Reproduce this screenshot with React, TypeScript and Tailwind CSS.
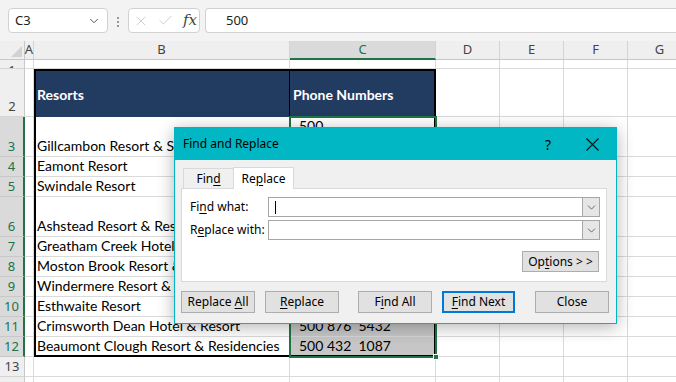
import { ChevronDown, X, Check } from "lucide-react";

// Excel row number, resort name, phone (line break = wrapped cell)
const data: Record<number, [string, string]> = {
  3: ["Gillcambon Resort & Spa", "500\n214  8876"],
  4: ["Eamont Resort", "500 318  2290"],
  5: ["Swindale Resort", "500 662  7413"],
  6: ["Ashstead Resort & Residencies", "500\n745  3321"],
  7: ["Greatham Creek Hotel & Resort", "500 127  9054"],
  8: ["Moston Brook Resort & Spa", "500 903  6618"],
  9: ["Windermere Resort & Spa", "500 551  2047"],
  10: ["Esthwaite Resort", "500 289  4410"],
  11: ["Crimsworth Dean Hotel & Resort", "500 876  5432"],
  12: ["Beaumont Clough Resort & Residencies", "500 432  1087"],
};

const rowNums = [1, 2, 3, 4, 5, 6, 7, 8, 9, 10, 11, 12, 13, 14];
const cols = ["A", "B", "C", "D", "E", "F", "G"];

function Btn({ children, w, primary }: { children: React.ReactNode; w: string; primary?: boolean }) {
  return (
    <div
      className={`${w} h-[22px] flex items-center justify-center bg-[#e1e1e1] ${
        primary ? "border-2 border-[#0078d7]" : "border border-[#adadad]"
      }`}
    >
      <span className="whitespace-pre">{children}</span>
    </div>
  );
}

function Combo({ caret }: { caret?: boolean }) {
  return (
    <div className="w-[332px] h-[20px] flex border border-[#a6a6a6] bg-white">
      <div className="flex-1 flex items-center">
        {caret && <div className="ml-[6px] w-[1px] h-[13px] bg-black" />}
      </div>
      <div className="w-[17px] h-full flex items-center justify-center bg-[#e6e6e6] border-l border-[#a6a6a6]">
        <ChevronDown size={13} strokeWidth={1.4} color="#444" />
      </div>
    </div>
  );
}

export default function App() {
  return (
    <div className="relative w-[676px] h-[382px] overflow-hidden bg-white font-['Noto_Sans',sans-serif]">
      {/* formula bar */}
      <div className="h-[41px] bg-[#f3f3f3] flex items-start pt-[8px]">
        <div className="ml-[8px] w-[100px] h-[25px] rounded-[4px] border border-[#d1d1d1] bg-white flex items-center pl-[6px] pr-[6px] text-[13px] text-[#222]">
          <span>C3</span>
          <ChevronDown size={14} strokeWidth={1.5} color="#444" className="ml-auto" />
        </div>
        <div className="ml-[9px] mt-[9px] flex flex-col gap-[2px]">
          <div className="w-[2px] h-[2px] bg-[#999]" />
          <div className="w-[2px] h-[2px] bg-[#999]" />
          <div className="w-[2px] h-[2px] bg-[#999]" />
        </div>
        <div className="ml-[9px] w-[72px] h-[25px] rounded-[4px] border border-[#d1d1d1] bg-white flex items-center pl-[4px]">
          <X size={16} strokeWidth={1.2} color="#c4c4c4" />
          <Check size={17} strokeWidth={1.2} color="#c4c4c4" className="ml-[8px]" />
          <span className="ml-[9px] font-['DejaVu_Serif',serif] italic text-[15px] text-[#444] leading-none">fx</span>
        </div>
        <div className="ml-[5px] flex-1 h-[25px] rounded-l-[4px] border border-r-0 border-[#d1d1d1] bg-white flex items-center pl-[20px] text-[13px] text-[#222]">
          500
        </div>
      </div>

      {/* sheet grid */}
      <div className="relative grid grid-cols-[25px_9px_256px_146px_64px_64px_64px_64px] grid-rows-[19px_9px_48px_40px_20px_20px_40px_20px_20px_20px_20px_20px_20px_20px_20px] text-[13px]">
        {/* column headers */}
        <div className="bg-[#efefef] border-r border-b border-[#c8c8c8] flex items-end justify-end pr-[2px] pb-[2px]">
          <svg width="11" height="11" viewBox="0 0 11 11">
            <polygon points="11,0 11,11 0,11" fill="#d2d2d2" />
          </svg>
        </div>
        {cols.map((c) => (
          <div
            key={c}
            className={`flex items-center justify-center whitespace-nowrap border-r border-[#d4d4d4] ${
              c === "C"
                ? "bg-[#dadada] text-[#217346] border-b-2 border-b-[#217346]"
                : "bg-[#efefef] text-[#444] border-b border-b-[#c8c8c8]"
            }`}
          >
            {c}
          </div>
        ))}

        {rowNums.map((n) => {
          const sel = n >= 3 && n <= 12;
          const row = data[n];
          return [
            <div
              key={`h${n}`}
              className={`overflow-hidden flex justify-center leading-[20px] border-b ${n === 1 ? "items-start" : "items-end"} ${
                sel
                  ? "bg-[#dadada] text-[#217346] border-r-2 border-r-[#217346] border-b-[#c8c8c8]"
                  : "bg-[#efefef] text-[#444] border-r border-r-[#c8c8c8] border-b-[#d4d4d4]"
              }`}
            >
              {n}
            </div>,
            <div key={`a${n}`} className="border-r border-b border-[#dadada]" />,
            n === 2 ? (
              <div key={`b${n}`} className="bg-[#223b61] border-r border-black flex items-center pl-[3px] pt-[2px] font-['Lato',sans-serif] font-bold text-[14px] text-white">
                Resorts
              </div>
            ) : (
              <div key={`b${n}`} className="border-r border-b border-[#dadada] flex items-end pl-[3px] font-['Lato',sans-serif] text-[14px] leading-[20px] text-black whitespace-nowrap overflow-hidden">
                {row ? row[0] : ""}
              </div>
            ),
            n === 2 ? (
              <div key={`c${n}`} className="bg-[#223b61] flex items-center pl-[3px] pt-[2px] font-['Lato',sans-serif] font-bold text-[14px] text-white">
                Phone Numbers
              </div>
            ) : (
              <div
                key={`c${n}`}
                className={`border-r border-b flex items-end pl-[9px] font-['Lato',sans-serif] text-[14px] leading-[20px] text-black whitespace-pre ${
                  n === 3 ? "bg-white border-[#dadada]" : sel ? "bg-[#c6c6c6] border-[#d6d6d6]" : "border-[#dadada]"
                }`}
              >
                {row ? row[1] : ""}
              </div>
            ),
            <div key={`d${n}`} className="border-r border-b border-[#dadada]" />,
            <div key={`e${n}`} className="border-r border-b border-[#dadada]" />,
            <div key={`f${n}`} className="border-r border-b border-[#dadada]" />,
            <div key={`g${n}`} className="border-r border-b border-[#dadada]" />,
          ];
        })}

        {/* table outline B2:C12 */}
        <div className="pointer-events-none absolute inset-0 col-start-3 col-end-5 row-start-3 row-end-14 border-2 border-black z-10" />
        {/* selection C3:C12 */}
        <div className="pointer-events-none absolute -inset-[1px] col-start-4 col-end-5 row-start-4 row-end-14 border-2 border-[#217346] z-20">
          <div className="absolute -right-[4px] -bottom-[4px] w-[6px] h-[6px] bg-[#217346] border border-white" />
        </div>
      </div>

      {/* Find and Replace dialog */}
      <div className="absolute left-[174px] top-[127px] w-[443px] h-[197px] z-30 border border-[#00b4c3] bg-[#f0f0f0] shadow-[0_3px_16px_rgba(0,0,0,0.3)] text-[12px] text-black">
        <div className="h-[32px] bg-[#00b7c3] flex items-center pl-[8px]">
          <span className="text-[12px]">Find and Replace</span>
          <span className="ml-auto text-[14px]">?</span>
          <svg width="13" height="13" viewBox="0 0 13 13" className="ml-[35px] mr-[17px]">
            <path d="M0.5 0.5 L12.5 12.5 M12.5 0.5 L0.5 12.5" stroke="#111" strokeWidth="1.1" />
          </svg>
        </div>
        <div className="pl-[6px] pt-[6px]">
          <div className="flex items-end h-[22px] pl-[2px]">
            <div className="w-[50px] h-[20px] border-t border-l border-[#d9d9d9] bg-[#f0f0f0] flex items-center justify-center">
              <span>
                Fin<u className="underline-offset-2">d</u>
              </span>
            </div>
            <div className="relative z-10 w-[61px] h-[22px] -mb-[1px] border-t border-l border-r border-[#d9d9d9] bg-white flex items-center justify-center">
              <span>
                Re<u className="underline-offset-2">p</u>lace
              </span>
            </div>
          </div>
          <div className="w-[426px] h-[94px] border border-[#d9d9d9] bg-white flex flex-col pt-[8px]">
            <div className="flex items-center">
              <div className="w-[86px] pl-[8px]">
                Fi<u className="underline-offset-2">n</u>d what:
              </div>
              <Combo caret />
            </div>
            <div className="flex items-center mt-[3px]">
              <div className="w-[86px] pl-[8px]">
                R<u className="underline-offset-2">e</u>place with:
              </div>
              <Combo />
            </div>
            <div className="self-end mr-[7px] mt-[11px] w-[77px] h-[21px] flex items-center justify-center bg-[#e1e1e1] border border-[#adadad]">
              <span>
                Op<u className="underline-offset-2">t</u>ions &gt; &gt;
              </span>
            </div>
          </div>
          <div className="flex mt-[9px]">
            <Btn w="w-[74px]">
              Replace <u className="underline-offset-2">A</u>ll
            </Btn>
            <div className="ml-[10px]">
              <Btn w="w-[74px]">
                <u className="underline-offset-2">R</u>eplace
              </Btn>
            </div>
            <div className="ml-[19px]">
              <Btn w="w-[74px]">
                F<u className="underline-offset-2">i</u>nd All
              </Btn>
            </div>
            <div className="ml-[10px]">
              <Btn w="w-[73px]" primary>
                <u className="underline-offset-2">F</u>ind Next
              </Btn>
            </div>
            <div className="ml-[20px]">
              <Btn w="w-[74px]">Close</Btn>
            </div>
          </div>
        </div>
      </div>
    </div>
  );
}
